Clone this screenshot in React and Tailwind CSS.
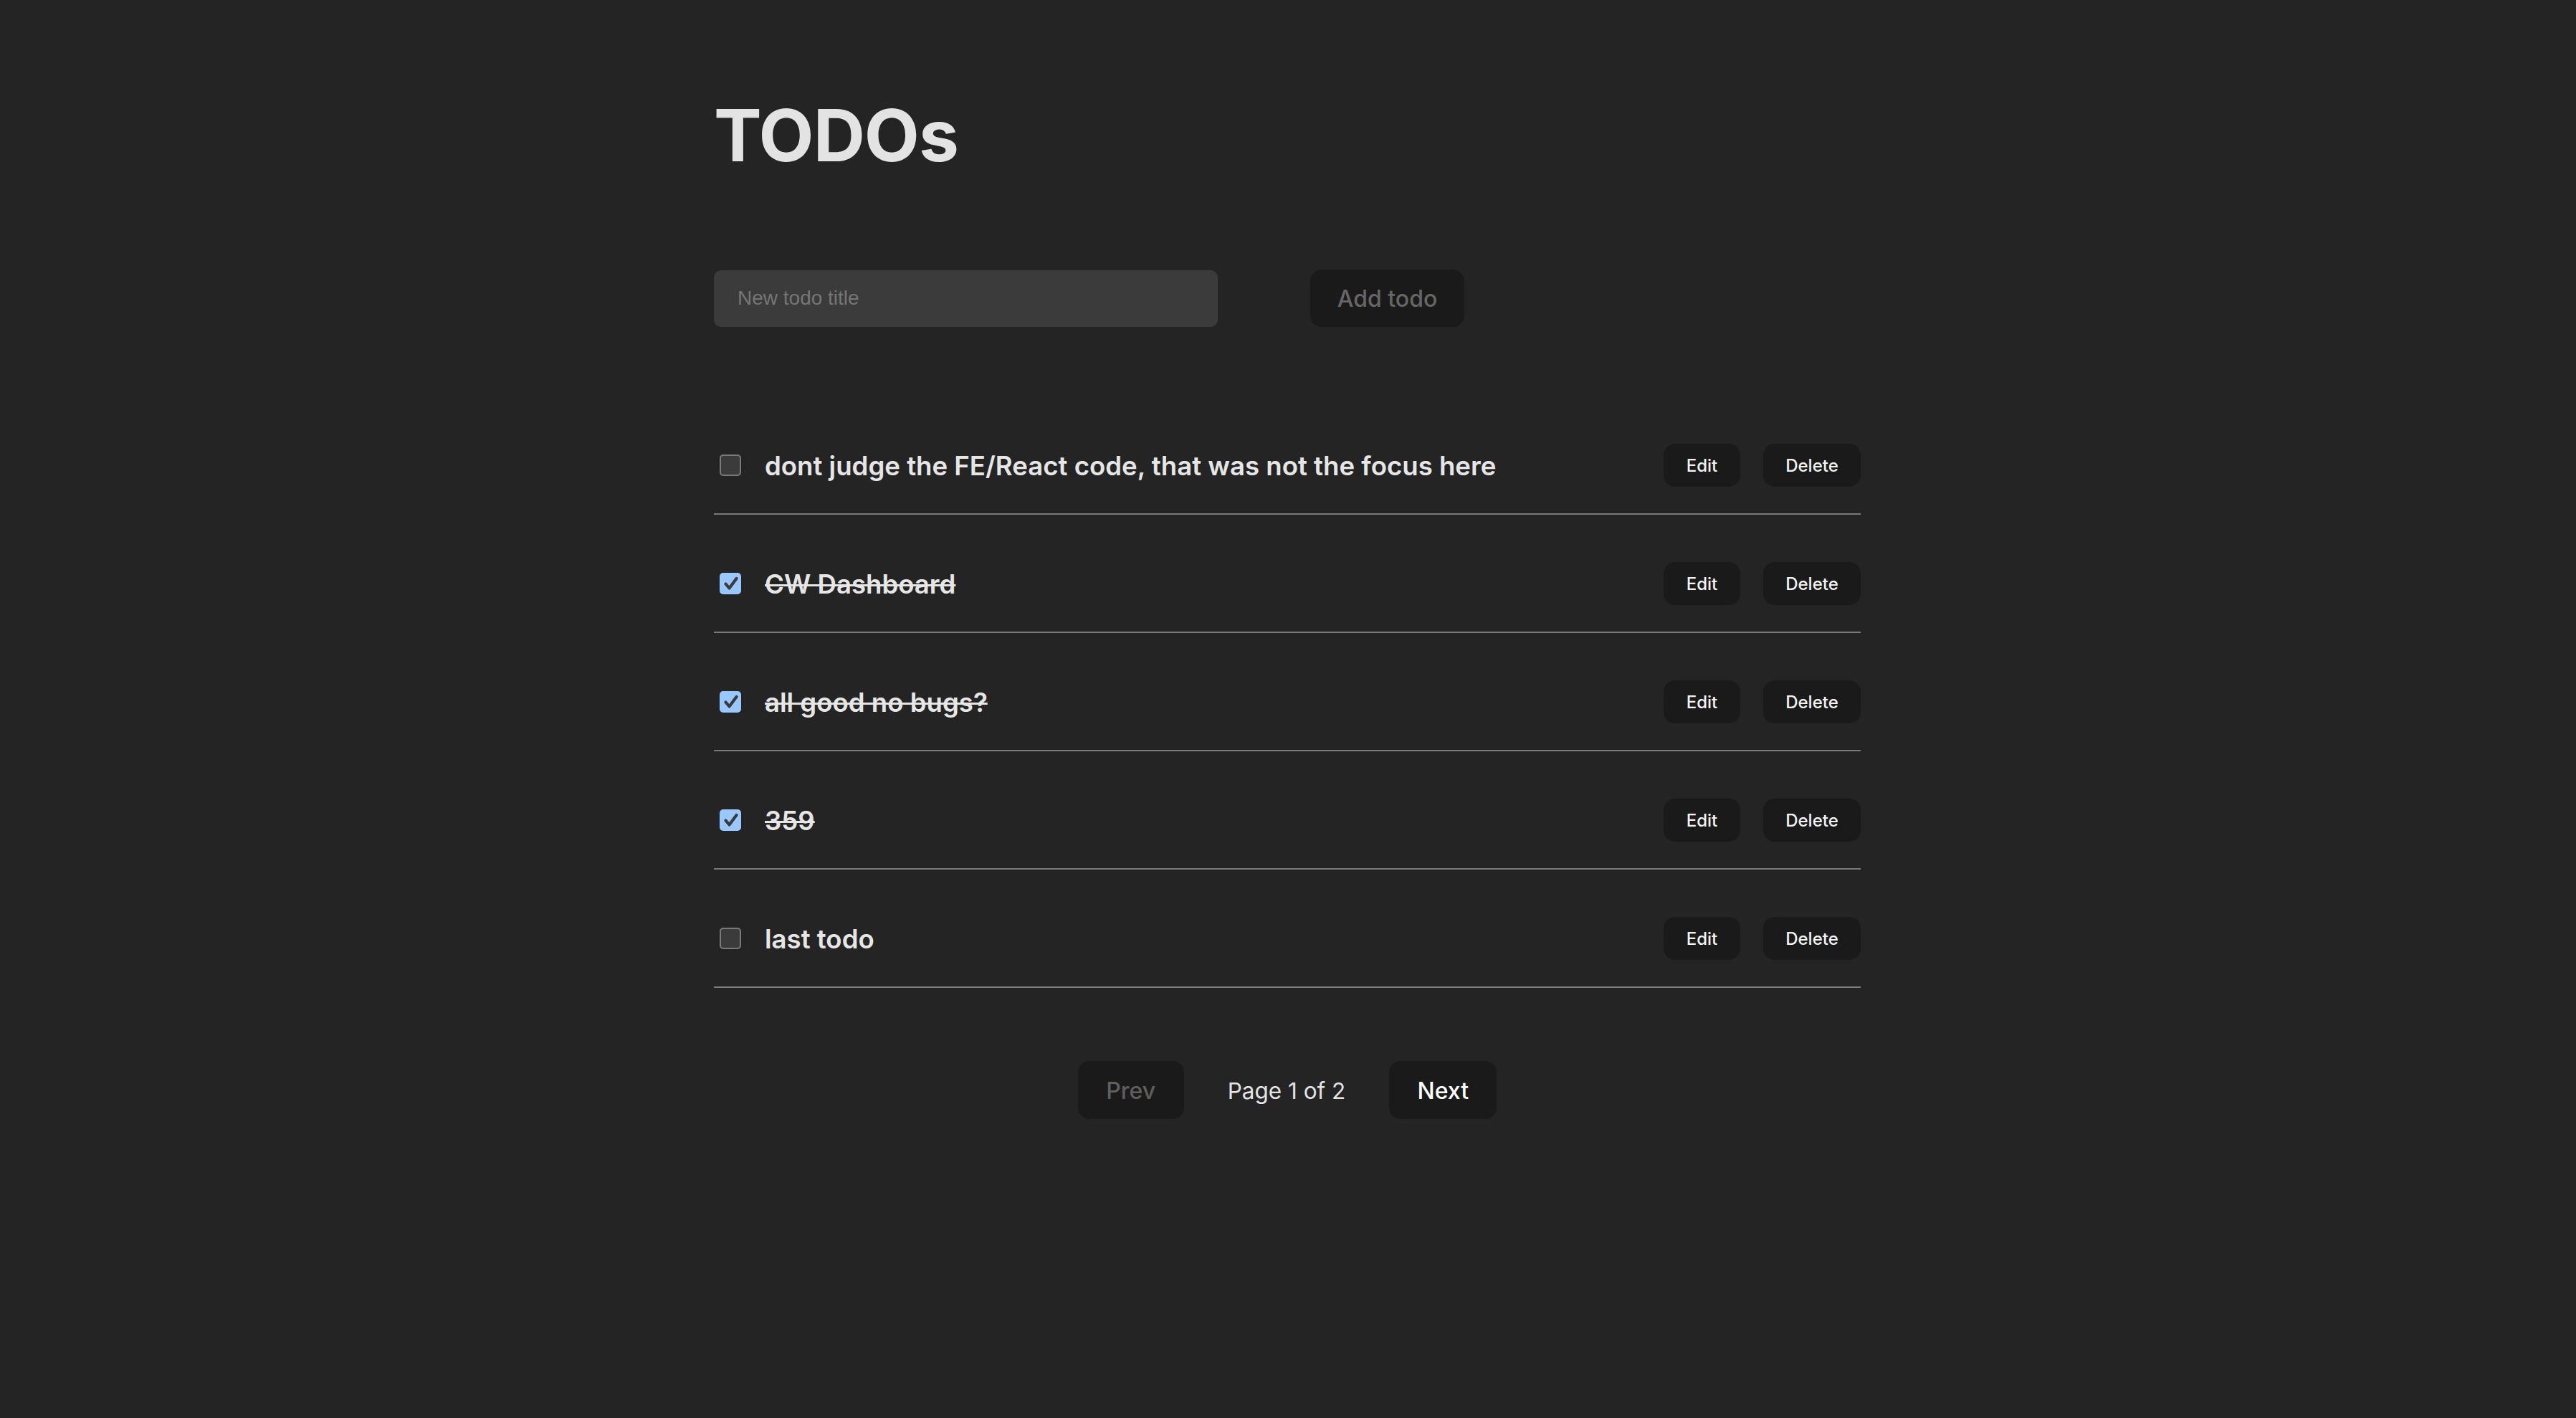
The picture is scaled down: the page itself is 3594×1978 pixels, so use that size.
import React from "react";

const todos = [
  { title: "dont judge the FE/React code, that was not the focus here", done: false },
  { title: "CW Dashboard", done: true },
  { title: "all good no bugs?", done: true },
  { title: "359", done: true },
  { title: "last todo", done: false },
];

function Box({ checked }) {
  if (checked) {
    return (
      <span className="ml-[8px] flex h-[30px] w-[30px] shrink-0 items-center justify-center rounded-[5px] bg-[#99c8ff]">
        <svg width="30" height="30" viewBox="0 0 30 30">
          <path d="M8.5 15.5 L13.5 21.5 L23.5 8" fill="none" stroke="#3b3b3b" strokeWidth="4.2" strokeLinecap="round" strokeLinejoin="round" />
        </svg>
      </span>
    );
  }
  return (
    <span className="ml-[8px] box-border h-[30px] w-[30px] shrink-0 rounded-[5px] border-2 border-[#7a7a7a] bg-[#3b3b3b]" />
  );
}

export default function App() {
  return (
    <div className="min-h-screen w-full bg-[#242424] text-[#e3e3e3]" style={{ fontFamily: "Inter, 'Noto Sans', sans-serif" }}>
      <div className="w-[1600px] pt-[134px]" style={{ marginLeft: "996px" }}>
        <h1 className="text-[100px] font-bold leading-[110px] tracking-[-1px] text-[#e3e3e3]">TODOs</h1>

        <div className="mt-[132px] flex h-[80px] items-center">
          <div className="flex h-[79px] w-[703px] items-center rounded-[10px] bg-[#3b3b3b] pl-[33px]">
            <span className="text-[28px] text-[#767676]" style={{ fontFamily: "'Liberation Sans', Arial, sans-serif" }}>
              New todo title
            </span>
          </div>
          <button className="ml-[129px] flex h-[80px] w-[215px] items-center justify-center rounded-[16px] bg-[#1a1a1a] pt-[2px] text-[32px] font-medium text-[#666666]">
            Add todo
          </button>
        </div>

        <ul className="mt-[97px]">
          {todos.map((t, i) => (
            <li key={i} className="flex items-center border-b-2 border-[#7a7a7a] pt-[66px] pb-[37px]">
              <div className="flex h-[60px] flex-1 items-center">
                <Box checked={t.done} />
                <span className={"ml-[33px] pt-[2px] text-[36.6px] font-semibold leading-[60px] text-[#e6e6e6] " + (t.done ? "line-through" : "")}>
                  {t.title}
                </span>
              </div>
              <button className="flex h-[60px] w-[107px] items-center justify-center rounded-[16px] bg-[#1a1a1a] pt-[2px] text-[24px] font-medium text-[#f2f2f2]">
                Edit
              </button>
              <button className="ml-[32px] flex h-[60px] w-[136px] items-center justify-center rounded-[16px] bg-[#1a1a1a] pt-[2px] text-[24px] font-medium text-[#f2f2f2]">
                Delete
              </button>
            </li>
          ))}
        </ul>

        <div className="mt-[102px] flex items-center justify-center gap-[61px]">
          <button className="flex h-[81px] w-[148px] items-center justify-center rounded-[16px] bg-[#1a1a1a] pt-[2px] text-[32px] font-medium text-[#5f5f5f]">
            Prev
          </button>
          <span className="pt-[2px] text-[31.5px] text-[#e3e3e3]">Page 1 of 2</span>
          <button className="flex h-[81px] w-[150px] items-center justify-center rounded-[16px] bg-[#1a1a1a] pt-[2px] text-[32px] font-medium text-[#ffffff]">
            Next
          </button>
        </div>
      </div>
    </div>
  );
}
